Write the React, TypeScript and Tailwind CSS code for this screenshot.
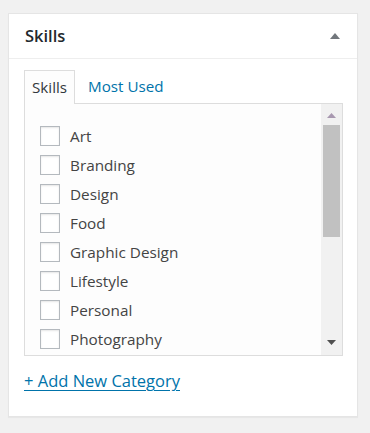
import React from "react";

const items = [
  "Art",
  "Branding",
  "Design",
  "Food",
  "Graphic Design",
  "Lifestyle",
  "Personal",
  "Photography",
];

export default function App() {
  return (
    <div
      className="w-[370px] h-[433px] bg-[#f1f1f1] pt-[13px] pl-[8px]"
      style={{ fontFamily: '"Open Sans", "Noto Sans", sans-serif' }}
    >
      <div className="w-[350px] h-[404px] bg-white border border-[#e5e5e5] shadow-[0_1px_1px_rgba(0,0,0,0.04)]">
        <div className="h-[45px] border-b border-[#eeeeee] flex items-center justify-between pl-[16px] pr-[16px]">
          <h2 className="text-[16.5px] font-semibold text-[#23282d] leading-none">Skills</h2>
          <svg width="10" height="6" viewBox="0 0 10 6" className="mr-[1px]">
            <polygon points="0,6 10,6 5,0" fill="#72777c" />
          </svg>
        </div>
        <div className="pl-[15px] pr-[14px] pt-[10px]">
          <div className="flex items-end text-[15.2px]">
            <div className="h-[34px] px-[7px] border border-b-0 border-[#dddddd] bg-[#fdfdfd] text-[#32373c] flex items-center relative top-[1px] z-10">
              Skills
            </div>
            <div className="h-[33px] px-[13px] text-[#0073aa] flex items-center">Most Used</div>
          </div>
          <div className="h-[253px] border border-[#dddddd] bg-[#fdfdfd] flex">
            <div className="flex-1 overflow-hidden pt-[22px] pl-[15px]">
              {items.map((it) => (
                <div key={it} className="h-[29px] flex items-start">
                  <div className="w-[20px] h-[20px] border border-[#b4b9be] bg-white shadow-[inset_0_1px_2px_rgba(0,0,0,0.1)] shrink-0" />
                  <span className="ml-[10px] text-[15.3px] text-[#444444] leading-[20px]">{it}</span>
                </div>
              ))}
            </div>
            <div className="w-[21px] bg-[#f1f1f1] flex flex-col items-center">
              <div className="h-[21px] flex items-center justify-center pt-[1px]">
                <svg width="9" height="5" viewBox="0 0 9 5">
                  <polygon points="0,5 9,5 4.5,0" fill="#a898b0" />
                </svg>
              </div>
              <div className="w-[17px] h-[112px] bg-[#c1c1c1]" />
              <div className="flex-1" />
              <div className="h-[21px] flex items-center justify-center pb-[5px]">
                <svg width="9" height="5" viewBox="0 0 9 5">
                  <polygon points="0,0 9,0 4.5,5" fill="#505050" />
                </svg>
              </div>
            </div>
          </div>
          <div className="pt-[14px]">
            <a href="#" className="block w-fit text-[16.5px] leading-[22px] text-[#0073aa] underline underline-offset-[3px]">
              + Add New Category
            </a>
          </div>
        </div>
      </div>
    </div>
  );
}
